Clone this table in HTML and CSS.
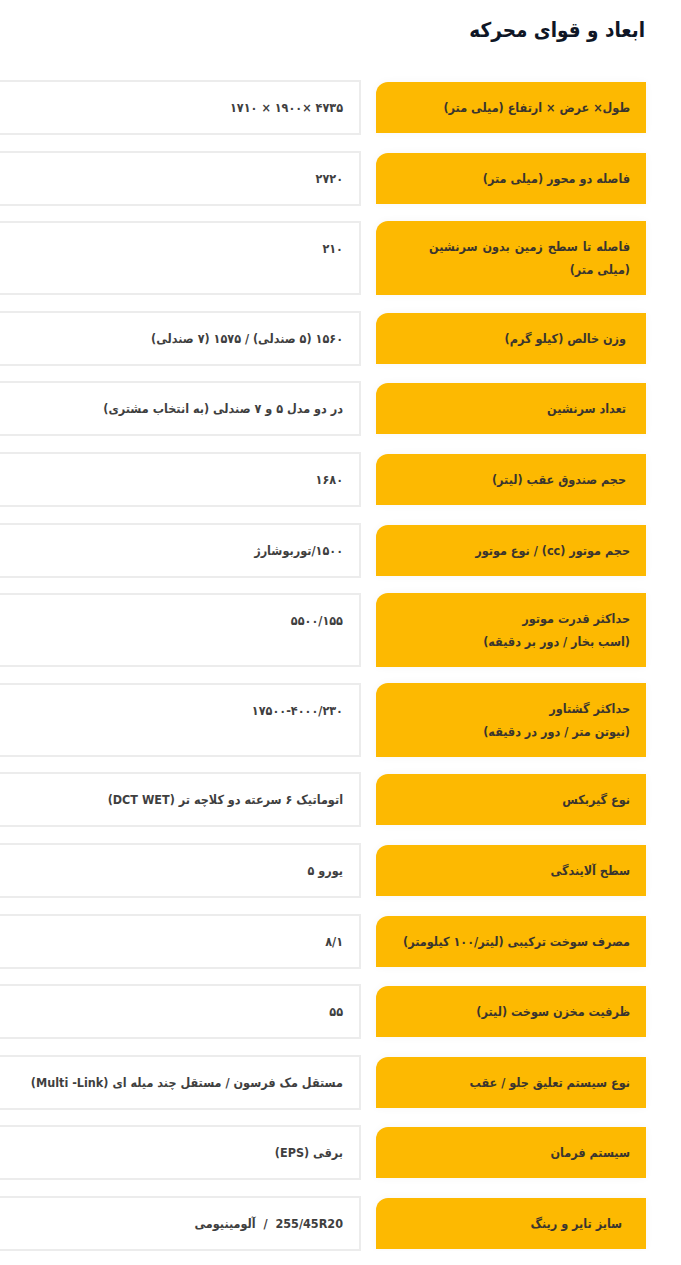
FILE: index.html
```html
<!DOCTYPE html>
<html lang="fa" dir="rtl">
<head>
<meta charset="utf-8">
<title>ابعاد و قوای محرکه</title>
<link rel="stylesheet" href="styles.css">
</head>
<body>
<section class="specs">
  <h2 class="specs-title">ابعاد و قوای محرکه</h2>
  <div class="spec-list">
    <div class="spec-row"><div class="spec-label">طول× عرض × ارتفاع (میلی متر)</div><div class="spec-value">۴۷۳۵ ×۱۹۰۰ × ۱۷۱۰</div></div>
    <div class="spec-row"><div class="spec-label">فاصله دو محور (میلی متر)</div><div class="spec-value">۲۷۲۰</div></div>
    <div class="spec-row"><div class="spec-label"><span class="wide">فاصله تا سطح زمین بدون سرنشین</span><br>(میلی متر)</div><div class="spec-value">۲۱۰</div></div>
    <div class="spec-row"><div class="spec-label">&nbsp;وزن خالص (کیلو گرم)</div><div class="spec-value">۱۵۶۰ (۵ صندلی) / ۱۵۷۵ (۷ صندلی)</div></div>
    <div class="spec-row"><div class="spec-label">&nbsp;تعداد سرنشین</div><div class="spec-value">در دو مدل ۵ و ۷ صندلی (به انتخاب مشتری)</div></div>
    <div class="spec-row"><div class="spec-label">&nbsp;حجم صندوق عقب (لیتر)</div><div class="spec-value">۱۶۸۰</div></div>
    <div class="spec-row"><div class="spec-label">حجم موتور (cc) / نوع موتور</div><div class="spec-value">۱۵۰۰/توربوشارژ</div></div>
    <div class="spec-row"><div class="spec-label">حداکثر قدرت موتور<br>(اسب بخار / دور بر دقیقه)</div><div class="spec-value">۵۵۰۰/۱۵۵</div></div>
    <div class="spec-row"><div class="spec-label">حداکثر گشتاور<br>(نیوتن متر / دور در دقیقه)</div><div class="spec-value">۱۷۵۰۰-۴۰۰۰/۲۳۰</div></div>
    <div class="spec-row"><div class="spec-label">نوع گیربکس</div><div class="spec-value">اتوماتیک ۶ سرعته دو کلاچه تر (DCT WET)</div></div>
    <div class="spec-row"><div class="spec-label">سطح آلایندگی</div><div class="spec-value">یورو ۵</div></div>
    <div class="spec-row"><div class="spec-label">مصرف سوخت ترکیبی (لیتر/۱۰۰ کیلومتر)</div><div class="spec-value">۸/۱</div></div>
    <div class="spec-row"><div class="spec-label">ظرفیت مخزن سوخت (لیتر)</div><div class="spec-value">۵۵</div></div>
    <div class="spec-row"><div class="spec-label">نوع سیستم تعلیق جلو / عقب</div><div class="spec-value">مستقل مک فرسون / مستقل چند میله ای (Multi -Link)</div></div>
    <div class="spec-row"><div class="spec-label">سیستم فرمان</div><div class="spec-value">برقی (EPS)</div></div>
    <div class="spec-row"><div class="spec-label">&nbsp;&nbsp;سایز تایر و رینگ</div><div class="spec-value">255/45R20&nbsp; / &nbsp;آلومینیومی</div></div>
  </div>
</section>
</body>
</html>
```
FILE: styles.css
```css
html, body {
  margin: 0;
  padding: 0;
  background: #ffffff;
}

body {
  direction: rtl;
  font-family: "DejaVu Sans", "Noto Sans", sans-serif;
}

.specs {
  margin-left: -10px;
  padding: 15px 35px 0 0;
}

.specs-title {
  margin: 0 0 35px 0;
  font-size: 20.5px;
  font-stretch: condensed;
  line-height: 30px;
  font-weight: 700;
  color: #0f1626;
  padding-right: 1px;
}

.spec-list {
  display: flex;
  flex-direction: column;
  gap: 15.6px;
}

.spec-row {
  display: flex;
  align-items: center;
  gap: 15px;
  min-height: 55px;
}

.spec-label {
  width: 270px;
  box-sizing: border-box;
  flex: none;
  background: #fdb901;
  border-top-left-radius: 12px;
  padding: 14px 16px 14px 6px;
  font-size: 12.5px;
  font-stretch: condensed;
  line-height: 23px;
  font-weight: 700;
  color: #3a352f;
  box-shadow: 0 0 8px rgba(0, 0, 0, 0.04);
}

.wide {
  word-spacing: 1px;
}

.spec-value {
  flex: 1;
  align-self: stretch;
  box-sizing: border-box;
  min-height: 55px;
  border: 2px solid #ececec;
  padding: 14px 16px 12px 16px;
  font-size: 12.5px;
  font-stretch: condensed;
  line-height: 23px;
  font-weight: 700;
  color: #3f3f3f;
}
```
